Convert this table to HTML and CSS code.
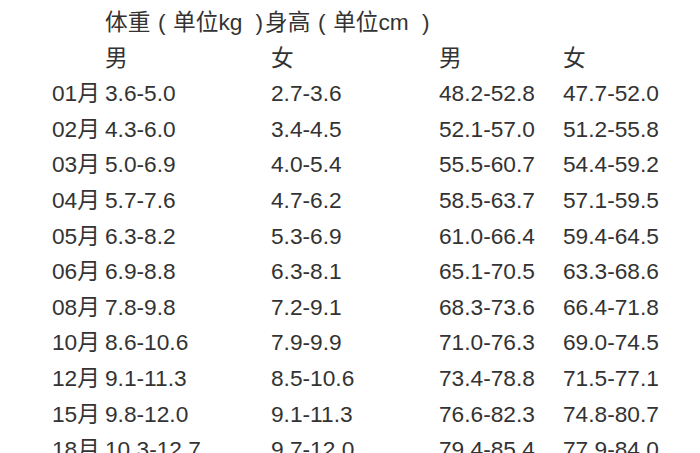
FILE: index.html
```html
<!DOCTYPE html>
<html lang="zh-CN">
<head>
<meta charset="utf-8">
<title>婴儿体重身高表</title>
<link rel="stylesheet" href="styles.css">
</head>
<body>
<div class="table">
  <div class="cell"></div><div class="cell title">体重<span class="po">(</span>单位kg<span class="pc">)</span>身高<span class="po">(</span>单位cm<span class="pc">)</span></div>
  <div class="cell"></div><div class="cell">男</div><div class="cell">女</div><div class="cell">男</div><div class="cell">女</div>
  <div class="cell">01月</div><div class="cell">3.6-5.0</div><div class="cell">2.7-3.6</div><div class="cell">48.2-52.8</div><div class="cell">47.7-52.0</div>
  <div class="cell">02月</div><div class="cell">4.3-6.0</div><div class="cell">3.4-4.5</div><div class="cell">52.1-57.0</div><div class="cell">51.2-55.8</div>
  <div class="cell">03月</div><div class="cell">5.0-6.9</div><div class="cell">4.0-5.4</div><div class="cell">55.5-60.7</div><div class="cell">54.4-59.2</div>
  <div class="cell">04月</div><div class="cell">5.7-7.6</div><div class="cell">4.7-6.2</div><div class="cell">58.5-63.7</div><div class="cell">57.1-59.5</div>
  <div class="cell">05月</div><div class="cell">6.3-8.2</div><div class="cell">5.3-6.9</div><div class="cell">61.0-66.4</div><div class="cell">59.4-64.5</div>
  <div class="cell">06月</div><div class="cell">6.9-8.8</div><div class="cell">6.3-8.1</div><div class="cell">65.1-70.5</div><div class="cell">63.3-68.6</div>
  <div class="cell">08月</div><div class="cell">7.8-9.8</div><div class="cell">7.2-9.1</div><div class="cell">68.3-73.6</div><div class="cell">66.4-71.8</div>
  <div class="cell">10月</div><div class="cell">8.6-10.6</div><div class="cell">7.9-9.9</div><div class="cell">71.0-76.3</div><div class="cell">69.0-74.5</div>
  <div class="cell">12月</div><div class="cell">9.1-11.3</div><div class="cell">8.5-10.6</div><div class="cell">73.4-78.8</div><div class="cell">71.5-77.1</div>
  <div class="cell">15月</div><div class="cell">9.8-12.0</div><div class="cell">9.1-11.3</div><div class="cell">76.6-82.3</div><div class="cell">74.8-80.7</div>
  <div class="cell">18月</div><div class="cell">10.3-12.7</div><div class="cell">9.7-12.0</div><div class="cell">79.4-85.4</div><div class="cell">77.9-84.0</div>
</div>
</body>
</html>
```

FILE: styles.css
```css
html, body {
  margin: 0;
  padding: 0;
  background: #ffffff;
  overflow: hidden;
}
body {
  font-family: "Liberation Sans", Arial, "Noto Sans CJK SC", sans-serif;
  font-size: 22.7px;
  color: #333333;
}
.table {
  display: grid;
  grid-template-columns: 53px 166px 168px 124px auto;
  padding: 5px 0 0 52px;
  line-height: 35.6px;
}
.cell {
  white-space: nowrap;
}
.title {
  grid-column: 2 / span 4;
}
.po, .pc {
  display: inline-block;
  width: 1em;
  box-sizing: border-box;
}
.po {
  text-align: center;
}
.pc {
  text-align: right;
  padding-right: 2px;
}
```
